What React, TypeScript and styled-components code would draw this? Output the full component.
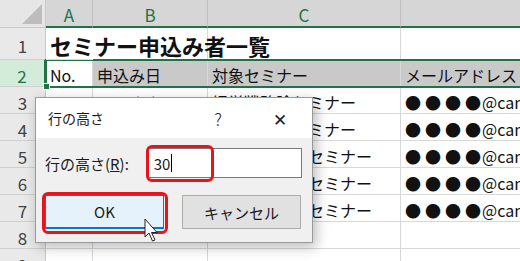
import React from 'react';
import styled, { createGlobalStyle } from 'styled-components';

const GlobalStyle = createGlobalStyle`
	body {
		margin: 0;
		background: #ffffff;
		font-family: 'Noto Sans CJK JP', 'Liberation Sans', sans-serif;
	}
`;

const Sheet = styled.div`
	position: relative;
	width: 520px;
	height: 261px;
	overflow: hidden;
	background: #ffffff;
`;

const Grid = styled.div`
	display: grid;
	grid-template-columns: 46px 47px 115px 193px 160px;
	grid-template-rows: 28px 32px 27px repeat(7, 27px);
`;

const Corner = styled.div`
	position: relative;
	background: #e6e6e6;
	border-right: 1px solid #c8c8c8;
	border-bottom: 1px solid #c8c8c8;
	&::after {
		content: '';
		position: absolute;
		right: 3px;
		bottom: 3px;
		border-left: 20px solid transparent;
		border-bottom: 20px solid #bdbdbd;
	}
`;

const ColHead = styled.div`
	display: flex;
	align-items: center;
	justify-content: center;
	background: #d6d6d6;
	color: #217346;
	font-size: 17px;
	border-right: 1px solid #c0c0c0;
	border-bottom: 2px solid #217346;
	padding-top: 2px;
`;

const RowHead = styled.div<{ $active?: boolean }>`
	display: flex;
	align-items: center;
	justify-content: center;
	background: ${(p) => (p.$active ? '#d3ecd9' : '#e9e9e9')};
	color: ${(p) => (p.$active ? '#217346' : '#444444')};
	font-size: 17px;
	border-bottom: 1px solid #d0d0d0;
	border-right: ${(p) => (p.$active ? '2px solid #217346' : '1px solid #c8c8c8')};
	padding-top: 4px;
`;

const Cell = styled.div<{ $shade?: boolean; $title?: boolean }>`
	display: flex;
	align-items: center;
	padding: 3px 4px 0;
	white-space: nowrap;
	overflow: visible;
	font-size: ${(p) => (p.$title ? '22px' : '16px')};
	font-weight: ${(p) => (p.$title ? 700 : 400)};
	color: #111111;
	background: ${(p) => (p.$shade ? '#c9c9c9' : '#ffffff')};
	border-right: 1px solid ${(p) => (p.$title ? 'transparent' : '#d8d8d8')};
	border-bottom: 1px solid #d8d8d8;
	position: relative;
	z-index: ${(p) => (p.$title ? 1 : 0)};
`;

const Dots = styled.span`
	letter-spacing: 4px;
	margin-right: -3px;
`;

const Selection = styled.div`
	position: absolute;
	left: 45px;
	top: 59px;
	right: -4px;
	height: 29px;
	border: 2px solid #217346;
	box-sizing: border-box;
	pointer-events: none;
	&::after {
		content: '';
		position: absolute;
		left: -4px;
		bottom: -4px;
		width: 5px;
		height: 5px;
		background: #217346;
		border: 1px solid #ffffff;
	}
`;

const Dialog = styled.div`
	position: absolute;
	left: 35px;
	top: 97px;
	width: 278px;
	height: 146px;
	box-sizing: border-box;
	background: #f0f0f0;
	border: 1px solid #9a9a9a;
	box-shadow: 3px 4px 12px rgba(0, 0, 0, 0.28);
	display: flex;
	flex-direction: column;
	font-size: 15px;
	color: #1a1a1a;
`;

const TitleBar = styled.div`
	height: 40px;
	background: #ffffff;
	display: flex;
	align-items: center;
	padding-left: 12px;
`;

const TitleText = styled.span`
	flex: 1;
	font-size: 14px;
`;

const TitleButton = styled.span<{ $w: number }>`
	width: ${(p) => p.$w}px;
	text-align: center;
	font-size: 17px;
	font-weight: 300;
	color: #222222;
`;

const Body = styled.div`
	display: flex;
	flex-direction: column;
	padding: 10px 10px 0 9px;
	gap: 17px;
`;

const Field = styled.div`
	display: flex;
	align-items: center;
	gap: 12px;
`;

const Label = styled.label`
	font-size: 15px;
	width: 91px;
	& u {
		text-decoration-thickness: 1px;
	}
`;

const Input = styled.div`
	position: relative;
	width: 155px;
	height: 30px;
	box-sizing: border-box;
	background: #ffffff;
	border: 1px solid #7a7a7a;
	display: flex;
	align-items: center;
	padding-left: 5px;
	font-size: 15px;
`;

const Caret = styled.span`
	display: inline-block;
	width: 1px;
	height: 18px;
	background: #000000;
	margin-left: 1px;
`;

const Buttons = styled.div`
	display: flex;
	gap: 18px;
`;

const Button = styled.div<{ $primary?: boolean }>`
	position: relative;
	width: 119px;
	height: 34px;
	box-sizing: border-box;
	display: flex;
	align-items: center;
	justify-content: center;
	font-size: 15px;
	background: ${(p) => (p.$primary ? '#e5f1fb' : '#e1e1e1')};
	border: ${(p) => (p.$primary ? '1px solid #0078d7' : '1px solid #adadad')};
	border-bottom-width: ${(p) => (p.$primary ? '2px' : '1px')};
`;

const Highlight = styled.span<{ $l: number; $t: number; $w: number; $h: number }>`
	position: absolute;
	left: ${(p) => p.$l}px;
	top: ${(p) => p.$t}px;
	width: ${(p) => p.$w}px;
	height: ${(p) => p.$h}px;
	box-sizing: border-box;
	border: 3px solid #e8131b;
	border-radius: 6px;
	pointer-events: none;
`;

const Pointer = styled.svg`
	position: absolute;
	left: 144px;
	top: 218px;
`;

const seminars = [
	['2021/5/10', '経営戦略論セミナー'],
	['2021/5/11', '営業力強化セミナー'],
	['2021/5/12', '財務分析実践セミナー'],
	['2021/5/14', '人事労務管理セミナー'],
	['2021/5/15', '新入社員向けセミナー'],
];

function App() {
	return (
		<Sheet>
			<GlobalStyle />
			<Grid>
				<Corner />
				<ColHead>A</ColHead>
				<ColHead>B</ColHead>
				<ColHead>C</ColHead>
				<ColHead />

				<RowHead>1</RowHead>
				<Cell $title>セミナー申込み者一覧</Cell>
				<Cell />
				<Cell />
				<Cell />

				<RowHead $active>2</RowHead>
				<Cell>No.</Cell>
				<Cell $shade>申込み日</Cell>
				<Cell $shade>対象セミナー</Cell>
				<Cell $shade>メールアドレス</Cell>

				{seminars.map(([date, name], i) => (
					<React.Fragment key={i}>
						<RowHead>{i + 3}</RowHead>
						<Cell>{i + 1}</Cell>
						<Cell>{date}</Cell>
						<Cell>{name}</Cell>
						<Cell>
							<Dots>●●●●</Dots>@campus.jp
						</Cell>
					</React.Fragment>
				))}

				{[8, 9, 10].map((n) => (
					<React.Fragment key={n}>
						<RowHead>{n}</RowHead>
						<Cell />
						<Cell />
						<Cell />
						<Cell />
					</React.Fragment>
				))}
			</Grid>

			<Selection />

			<Dialog>
				<TitleBar>
					<TitleText>行の高さ</TitleText>
					<TitleButton $w={60}>?</TitleButton>
					<TitleButton $w={64}>✕</TitleButton>
				</TitleBar>
				<Body>
					<Field>
						<Label>
							行の高さ(<u>R</u>):
						</Label>
						<Input>
							30
							<Caret />
							<Highlight $l={-3} $t={-4} $w={68} $h={37} />
						</Input>
					</Field>
					<Buttons>
						<Button $primary>
							OK
							<Highlight $l={-4} $t={-4} $w={126} $h={42} />
						</Button>
						<Button>キャンセル</Button>
					</Buttons>
				</Body>
			</Dialog>

			<Pointer width="14" height="26" viewBox="0 0 14 26">
				<path
					d="M1 1 L1 19 L5 15 L8.5 23 L11 22 L7.5 14.5 L13 14.5 Z"
					fill="#ffffff"
					stroke="#222222"
					strokeWidth="1"
					strokeLinejoin="round"
				/>
			</Pointer>
		</Sheet>
	);
}

export default App;
